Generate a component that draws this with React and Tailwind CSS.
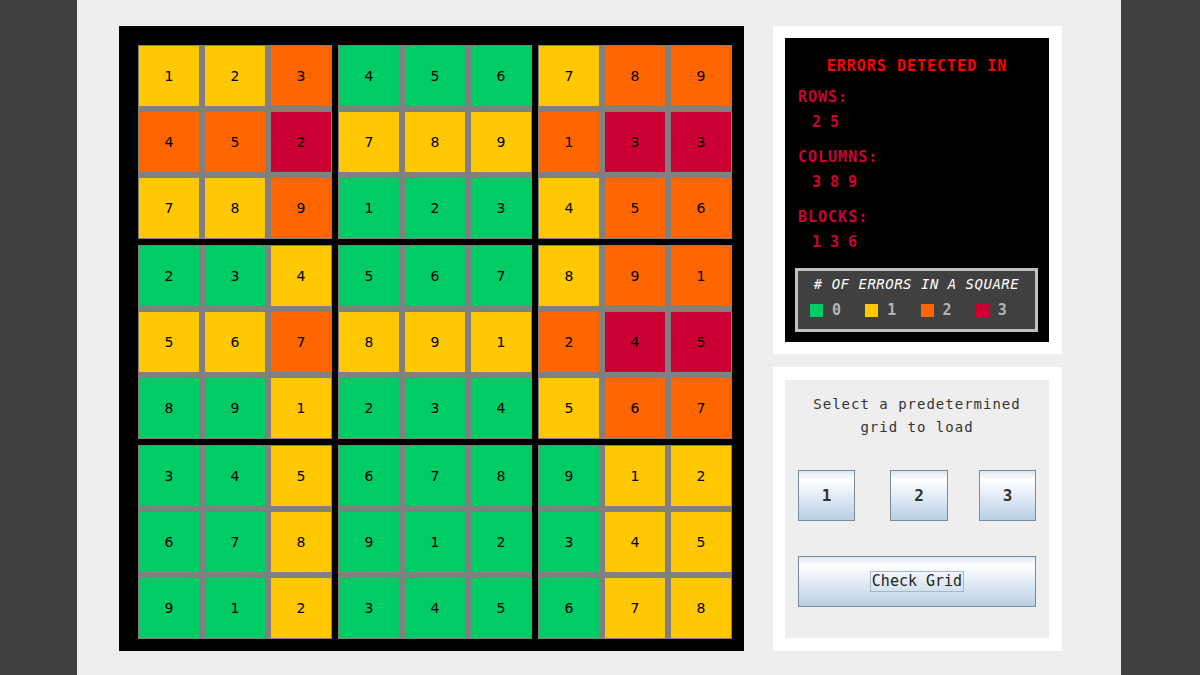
import React from "react";

const grid = [
  [1, 2, 3, 4, 5, 6, 7, 8, 9],
  [4, 5, 2, 7, 8, 9, 1, 3, 3],
  [7, 8, 9, 1, 2, 3, 4, 5, 6],
  [2, 3, 4, 5, 6, 7, 8, 9, 1],
  [5, 6, 7, 8, 9, 1, 2, 4, 5],
  [8, 9, 1, 2, 3, 4, 5, 6, 7],
  [3, 4, 5, 6, 7, 8, 9, 1, 2],
  [6, 7, 8, 9, 1, 2, 3, 4, 5],
  [9, 1, 2, 3, 4, 5, 6, 7, 8],
];

const badRows = [2, 5];
const badCols = [3, 8, 9];
const badBlocks = [1, 3, 6];

const colors = ["bg-[#00cc66]", "bg-[#ffc800]", "bg-[#ff6600]", "bg-[#cc0033]"];

function errorCount(r, c) {
  const block = Math.floor(r / 3) * 3 + Math.floor(c / 3) + 1;
  let n = 0;
  if (badRows.includes(r + 1)) n++;
  if (badCols.includes(c + 1)) n++;
  if (badBlocks.includes(block)) n++;
  return n;
}

const mono = "font-['DejaVu_Sans_Mono',monospace]";

function Block({ b }) {
  const br = Math.floor(b / 3) * 3;
  const bc = (b % 3) * 3;
  const cells = [];
  for (let i = 0; i < 3; i++) {
    for (let j = 0; j < 3; j++) {
      const r = br + i;
      const c = bc + j;
      cells.push(
        <div
          key={`${i}-${j}`}
          className={`w-[60px] h-[60px] flex items-center justify-center text-[14px] text-black ${colors[errorCount(r, c)]}`}
        >
          {grid[r][c]}
        </div>
      );
    }
  }
  return <div className="bg-[#808080] p-px grid grid-cols-3 gap-[6px]">{cells}</div>;
}

function Label({ children }) {
  return (
    <div className="text-[15px] leading-[20px] font-bold tracking-[1px] text-[#cc0033]">
      {children}
    </div>
  );
}

function Values({ children }) {
  return (
    <div className="pl-[14px] mt-[5px] text-[15px] leading-[20px] font-bold text-[#cc0033] whitespace-pre">
      {children}
    </div>
  );
}

const btn =
  "border border-[#7a8a99] bg-linear-to-b from-[#dde8f3] via-white via-[18%] to-[#b8cfe5] flex items-center justify-center text-[#333]";

export default function App() {
  return (
    <div className="w-[1200px] h-[675px] bg-[#404040] pl-[77px] font-['DejaVu_Sans',sans-serif]">
      <div className="w-[1044px] h-[675px] bg-[#eeeeee] pl-[42px] pt-[26px] flex gap-[29px]">
        {/* Sudoku board */}
        <div className="w-[625px] h-[625px] bg-black pt-[19px] pl-[19px]">
          <div className="grid grid-cols-3 gap-[6px] w-fit">
            {Array.from({ length: 9 }).map((_, b) => (
              <Block key={b} b={b} />
            ))}
          </div>
        </div>

        {/* Right side */}
        <div className={`w-[289px] flex flex-col gap-[13px] ${mono}`}>
          <div className="bg-white pt-[12px] pb-[12px] pl-[12px] pr-[13px]">
            <div className="bg-black h-[304px] pt-[18px] px-[13px]">
              <div className="text-center text-[15px] leading-[20px] font-bold tracking-[1px] text-[#ff0000]">
                ERRORS DETECTED IN
              </div>
              <div className="mt-[11px]">
                <Label>ROWS:</Label>
                <Values>2 5</Values>
              </div>
              <div className="mt-[15px]">
                <Label>COLUMNS:</Label>
                <Values>3 8 9</Values>
              </div>
              <div className="mt-[15px]">
                <Label>BLOCKS:</Label>
                <Values>1 3 6</Values>
              </div>
              <div className="mt-[16px] -mx-[3px] w-[243px] h-[64px] border-[3px] border-[#c0c0c0] bg-[#404040] pt-[3px] pl-[12px]">
                <div className="text-center pr-[12px] italic text-[14px] leading-[20px] tracking-[0.5px] text-white">
                  # OF ERRORS IN A SQUARE
                </div>
                <div className="flex mt-[8px]">
                  {["0", "1", "2", "3"].map((n, i) => (
                    <div key={n} className={`flex items-center gap-[9px] ${i === 3 ? "w-[60px]" : "w-[56px]"}`}>
                      <span className={`w-[13px] h-[13px] ${colors[i]}`}></span>
                      <span className="text-[15px] font-bold text-[#b4b4b4] leading-[16px]">{n}</span>
                    </div>
                  ))}
                </div>
              </div>
            </div>
          </div>

          <div className="bg-white pt-[13px] pb-[13px] pl-[12px] pr-[13px]">
            <div className="bg-[#eeeeee] h-[258px] px-[13px] pt-[13px]">
              <div className="text-center text-[14px] leading-[23px] tracking-[1px] text-[#333]">
                <div>Select a predetermined</div>
                <div>grid to load</div>
              </div>
              <div className="flex mt-[31px]">
                <div className={`${btn} w-[57px] h-[51px] text-[16px] font-bold`}>1</div>
                <div className={`${btn} ml-[35px] w-[58px] h-[51px] text-[16px] font-bold`}>2</div>
                <div className={`${btn} ml-[31px] w-[57px] h-[51px] text-[16px] font-bold`}>3</div>
              </div>
              <div className={`${btn} mt-[35px] w-[238px] h-[51px]`}>
                <span className="border border-[#a3b8cc] px-px text-[15px] leading-[19px] text-[#222]">
                  Check Grid
                </span>
              </div>
            </div>
          </div>
        </div>
      </div>
    </div>
  );
}
